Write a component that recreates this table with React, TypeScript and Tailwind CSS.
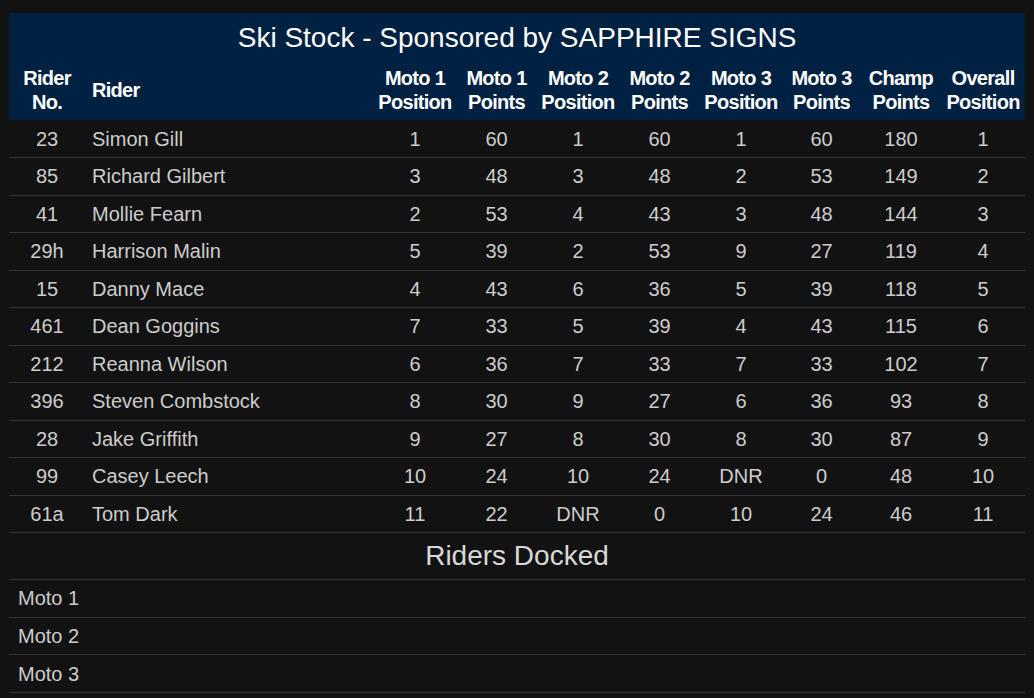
import React from 'react';

type Row = [string, string, string, string, string, string, string, string, string, string];

const rows: Row[] = [
  ['23', 'Simon Gill', '1', '60', '1', '60', '1', '60', '180', '1'],
  ['85', 'Richard Gilbert', '3', '48', '3', '48', '2', '53', '149', '2'],
  ['41', 'Mollie Fearn', '2', '53', '4', '43', '3', '48', '144', '3'],
  ['29h', 'Harrison Malin', '5', '39', '2', '53', '9', '27', '119', '4'],
  ['15', 'Danny Mace', '4', '43', '6', '36', '5', '39', '118', '5'],
  ['461', 'Dean Goggins', '7', '33', '5', '39', '4', '43', '115', '6'],
  ['212', 'Reanna Wilson', '6', '36', '7', '33', '7', '33', '102', '7'],
  ['396', 'Steven Combstock', '8', '30', '9', '27', '6', '36', '93', '8'],
  ['28', 'Jake Griffith', '9', '27', '8', '30', '8', '30', '87', '9'],
  ['99', 'Casey Leech', '10', '24', '10', '24', 'DNR', '0', '48', '10'],
  ['61a', 'Tom Dark', '11', '22', 'DNR', '0', '10', '24', '46', '11'],
];

const headers = [
  ['Rider', 'No.'],
  ['Rider'],
  ['Moto 1', 'Position'],
  ['Moto 1', 'Points'],
  ['Moto 2', 'Position'],
  ['Moto 2', 'Points'],
  ['Moto 3', 'Position'],
  ['Moto 3', 'Points'],
  ['Champ', 'Points'],
  ['Overall', 'Position'],
];

const widths = [76, 289, 82, 81, 82, 81, 82, 79, 80, 84];

const App: React.FC = () => {
  return (
    <div
      className="min-h-[698px] bg-[#121212] px-[9px] pt-[13px] text-[#cccccc]"
      style={{ fontFamily: '"Liberation Sans", Arial, sans-serif' }}
    >
      <table className="w-[1016px] table-fixed border-collapse">
        <colgroup>
          {widths.map((w, i) => (
            <col key={i} style={{ width: w }} />
          ))}
        </colgroup>
        <thead className="bg-[#002142] text-white">
          <tr>
            <th colSpan={10} className="h-[47px] pt-[2px] text-[28px] font-normal leading-none">
              Ski Stock - Sponsored by SAPPHIRE SIGNS
            </th>
          </tr>
          <tr className="h-[60px]">
            {headers.map((h, i) => (
              <th
                key={i}
                className={`text-[20px] font-bold leading-[24px] tracking-[-0.7px] ${
                  i === 1 ? 'pl-[7px] text-left' : 'text-center'
                }`}
              >
                {h.map((line, j) => (
                  <div key={j}>{line}</div>
                ))}
              </th>
            ))}
          </tr>
        </thead>
        <tbody>
          {rows.map((r, i) => (
            <tr key={i} className="h-[37.5px] border-b border-[#353535]">
              {r.map((c, j) => (
                <td
                  key={j}
                  className={`text-[20px] leading-none ${j === 1 ? 'pl-[7px] text-left' : 'text-center'}`}
                >
                  {c}
                </td>
              ))}
            </tr>
          ))}
        </tbody>
      </table>

      {/* Riders docked */}
      <div className="w-[1016px]">
        <div className="flex h-[47px] items-center justify-center border-b border-[#353535] text-[28px] text-[#d8d8d8]">
          Riders Docked
        </div>
        {['Moto 1', 'Moto 2', 'Moto 3'].map((m) => (
          <div
            key={m}
            className="flex h-[37.7px] items-center border-b border-[#353535] pl-[9px] text-[20px]"
          >
            {m}
          </div>
        ))}
      </div>
    </div>
  );
};

export default App;
